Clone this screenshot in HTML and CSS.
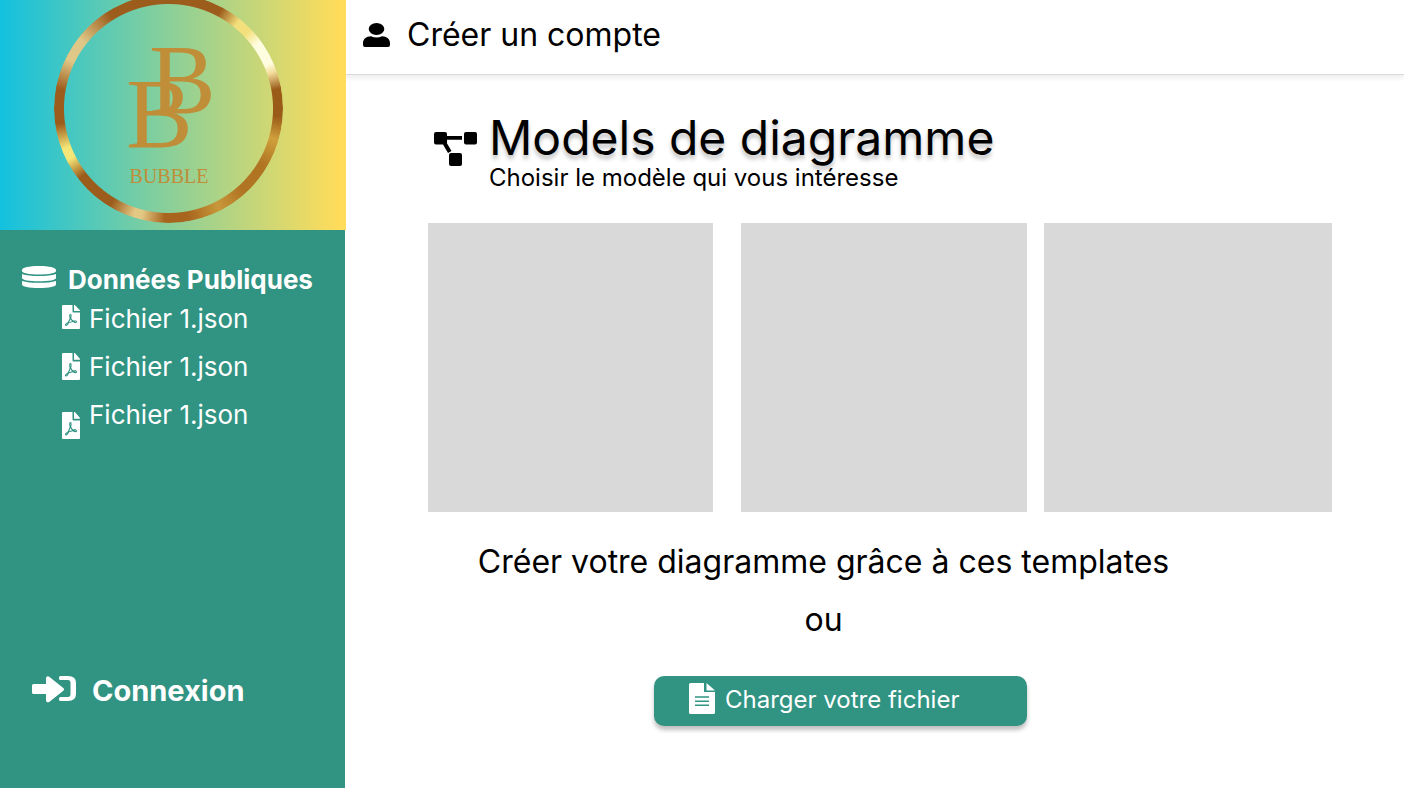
FILE: index.html
```html
<!DOCTYPE html>
<html lang="fr">
<head>
<meta charset="utf-8">
<title>Bubble</title>
<link rel="stylesheet" href="styles.css">
</head>
<body>
<svg class="sprite" aria-hidden="true">
  <symbol id="pdf" viewBox="0 0 384 512" preserveAspectRatio="none"><path d="M181.9 256.1c-5-16-4.9-46.9-2-46.9 8.4 0 7.6 36.9 2 46.9zm-1.7 47.2c-7.7 20.2-17.3 43.3-28.4 62.7 18.3-7 39-17.2 62.9-21.9-12.7-9.6-24.9-23.4-34.5-40.8zM86.1 428.1c0 .8 13.2-5.4 34.9-40.2-6.7 6.3-29.1 24.5-34.9 40.2zM248 160h136v328c0 13.3-10.7 24-24 24H24c-13.3 0-24-10.7-24-24V24C0 10.7 10.7 0 24 0h200v136c0 13.2 10.8 24 24 24zm-8 171.8c-20-12.2-33.3-29-42.7-53.8 4.5-18.5 11.6-46.6 6.2-64.2-4.7-29.4-42.4-26.5-47.8-6.8-5 18.3-.4 44.1 8.1 77-11.6 27.6-28.7 64.6-40.8 85.8-.1 0-.1.1-.2.1-27.1 13.9-73.6 44.5-54.5 68 5.6 6.900 16 10 21.500 10 17.900 0 35.700-18 61.100-61.800 25.800-8.500 54.100-19.100 79-23.200 21.700 11.800 47.100 19.500 64 19.500 29.200 0 31.200-32 19.700-43.400-13.900-13.600-54.300-9.700-73.600-7.200zM377 105L279 7c-4.500-4.500-10.600-7-17-7h-6v128h128v-6.100c0-6.300-2.500-12.400-7-16.900zm-74.100 255.300c4.100-2.700-2.500-11.900-42.800-9 37.100 15.800 42.800 9 42.800 9z"/></symbol>
</svg>
<div class="app">
  <aside class="sidebar">
    <div class="logo">
      <div class="ring"></div>
      <svg class="monogram" viewBox="0 0 100 160" role="img" aria-label="Bubble">
        <text class="initial" x="30" y="83">B</text>
        <text class="initial" x="7" y="117">B</text>
        <text class="brand" x="50" y="153">BUBBLE</text>
      </svg>
    </div>
    <section class="data">
      <h2 class="data-title">
        <svg class="icon-database" viewBox="0 0 34 22"><path d="M0 4C0 1.600 7 0 17 0s17 1.600 17 4v1c0 2-7 3.500-17 3.500S0 7 0 5zM0 8c4 1.500 10 2 17 2s13-.5 17-2v4c0 2-7 3.300-17 3.300S0 14 0 12zM0 15c4 1.400 10 1.800 17 1.800S30 16.400 34 15v3.500c0 2-7 3.500-17 3.500S0 20.500 0 18.500z"/></svg>
        <span>Données Publiques</span>
      </h2>
      <ul class="files">
        <li><a class="file" href="#"><svg class="icon-pdf short"><use href="#pdf"/></svg>Fichier 1.json</a></li>
        <li><a class="file" href="#"><svg class="icon-pdf"><use href="#pdf"/></svg>Fichier 1.json</a></li>
        <li><a class="file" href="#"><svg class="icon-pdf low"><use href="#pdf"/></svg>Fichier 1.json</a></li>
      </ul>
    </section>
    <a class="login" href="#">
      <svg class="icon-login" viewBox="0 0 44 27"><path d="M1.500 8H14V2.500C14 .5 16-.3 17.500 1L31.300 12c1 .8 1 2 0 2.800L17.500 25.800C16 27 14 26.200 14 24.300V18H1.500Q0 18 0 16.500v-7Q0 8 1.500 8z"/><path d="M28.500 0H36q8 0 8 7v11q0 7-8 7h-7.500q-1.500 0-1.500-1.500v-1q0-1.500 1.500-1.500H36q2.500 0 2.500-3V7q0-3-2.500-3h-7.500Q27 4 27 2.500v-1Q27 0 28.500 0z"/></svg>
      Connexion
    </a>
  </aside>
  <div class="page">
    <header class="topbar">
      <a class="account" href="#">
        <svg class="icon-user" viewBox="0 0 27 24"><ellipse cx="13.500" cy="6" rx="7.800" ry="6"/><path d="M8 13.300q5.500 2.400 11 0c5 0 8 3.200 8 7V22q0 2-2 2H2q-2 0-2-2v-1.700c0-3.800 3-7 8-7z"/></svg>
        Créer un compte
      </a>
    </header>
    <main class="content">
      <div class="intro">
        <svg class="icon-diagram" viewBox="0 0 43 34"><path d="M12 4h16v3.800H12zM9 12.500l3.500-2 5 8.500-3.500 2z"/><rect width="13" height="12.500" rx="2"/><rect x="30" width="13" height="12.500" rx="2"/><rect x="15" y="21" width="13" height="13" rx="2"/></svg>
        <div>
          <h1 class="title">Models de diagramme</h1>
          <p class="subtitle">Choisir le modèle qui vous intéresse</p>
        </div>
      </div>
      <div class="templates">
        <div class="template"></div>
        <div class="template"></div>
        <div class="template"></div>
      </div>
      <div class="actions">
        <p class="prompt">Créer votre diagramme grâce à ces templates</p>
        <p class="prompt">ou</p>
        <button class="upload" type="button">
          <svg class="icon-file" viewBox="0 0 26 31"><path fill-rule="evenodd" d="M1.500 0H15v9h11v20.500q0 1.500-1.500 1.500h-23Q0 31 0 29.500v-28Q0 0 1.500 0zM6 13.200v1.500h14v-1.500zm0 4.200v1.500h14v-1.500zm0 4.200v1.500h14v-1.500zM17.500 0 26 7.500h-8.500z"/></svg>
          Charger votre fichier
        </button>
      </div>
    </main>
  </div>
</div>
</body>
</html>
```
FILE: styles.css
```css
* { box-sizing: border-box; }
body {
  margin: 0;
  background: #fff;
  color: #000;
  font-family: Inter, "Liberation Sans", sans-serif;
}
h1, h2, p, ul { margin: 0; padding: 0; font-weight: 400; }
ul { list-style: none; }
a { color: inherit; text-decoration: none; }
svg { flex: none; fill: currentColor; }
.sprite { position: absolute; width: 0; height: 0; }

.app {
  display: grid;
  grid-template-columns: 345px 1fr;
  min-height: 100vh;
}

.sidebar {
  display: flex;
  flex-direction: column;
  background: #319382;
  color: #fff;
}
.logo {
  position: relative;
  height: 230px;
  margin-right: -1px;
  overflow: hidden;
  background: linear-gradient(90deg, #13c1df, #86cf9b 47%, #ffdc5a 98%);
}
.ring {
  position: absolute;
  left: 54px;
  top: -6px;
  width: 229px;
  height: 229px;
  border-radius: 50%;
  background: conic-gradient(#9c5d1c 0deg 28deg, #f3e07c 39deg 46deg, #fffde0 54deg 66deg, #f3dc98 71deg, #9a5a18 80deg 94deg, #cfa03c 106deg, #b07422 121deg 138deg, #c8983a 153deg, #a8651e 170deg 182deg, #e3c884 194deg 198deg, #9c5d1c 211deg 232deg, #f5e678 243deg 249deg, #9c5d1c 262deg 280deg, #dfc887 296deg 308deg, #9c5d1c 328deg 360deg);
  mask: radial-gradient(circle, transparent 104px, #000 105px);
}
.monogram {
  position: absolute;
  left: 119px;
  top: 30px;
  width: 100px;
  height: 160px;
  fill: #c08d38;
  font-family: "Liberation Serif", serif;
}
.initial { font-size: 100px; }
.brand { font-size: 20px; text-anchor: middle; }

.data { padding: 30px 22px 0; }
.data-title {
  display: flex;
  gap: 12px;
  font-size: 26px;
  font-weight: 700;
  line-height: 40px;
}
.icon-database { width: 34px; height: 22px; margin-top: 6px; }
.files { padding-left: 40px; }
.file {
  display: flex;
  align-items: flex-start;
  gap: 9px;
  height: 48px;
  font-size: 26px;
  line-height: 38px;
}
.icon-pdf { width: 18px; height: 27px; margin-top: 5px; }
.icon-pdf.short { height: 24px; }
.icon-pdf.low { margin-top: 16px; }
.login {
  display: flex;
  align-items: flex-start;
  gap: 16px;
  margin-top: auto;
  padding: 0 32px 79px;
  font-size: 29px;
  font-weight: 700;
  line-height: 36px;
}
.icon-login { width: 44px; height: 27px; margin-top: 3px; }

.page { display: flex; flex-direction: column; }
.topbar {
  height: 75px;
  padding: 15px 18px;
  border-bottom: 1px solid #d9d9d9;
  box-shadow: 0 4px 4px rgba(0, 0, 0, .06);
}
.account {
  display: flex;
  align-items: center;
  gap: 17px;
  font-size: 32px;
  line-height: 40px;
}
.icon-user { width: 27px; height: 24px; }

.content { padding: 36px 72px 48px 83px; }
.intro { display: flex; gap: 12px; padding-left: 6px; }
.icon-diagram { width: 43px; height: 34px; margin-top: 21px; }
.title {
  font-size: 48px;
  line-height: 54px;
  text-shadow: 0 4px 4px rgba(0, 0, 0, .25);
}
.subtitle { font-size: 24px; line-height: 26px; }
.templates { display: flex; gap: 17px; margin-top: 32px; }
.template { flex: 285; height: 289px; background: #d9d9d9; }
.template:first-child { margin-right: 11px; }
.template:last-child { flex: 288; }
.actions {
  display: flex;
  flex-direction: column;
  align-items: center;
  gap: 18px;
  margin-top: 30px;
  padding-right: 113px;
}
.prompt { font-size: 32px; line-height: 40px; }
.upload {
  display: flex;
  align-items: flex-start;
  gap: 10px;
  width: 373px;
  height: 50px;
  margin: 18px 0 0 34px;
  padding: 7px 35px;
  border: 0;
  border-radius: 10px;
  background: #319382;
  box-shadow: 0 4px 4px rgba(0, 0, 0, .25);
  color: #fff;
  font: 400 24px/34px Inter, "Liberation Sans", sans-serif;
}
.icon-file { width: 26px; height: 31px; }
```
